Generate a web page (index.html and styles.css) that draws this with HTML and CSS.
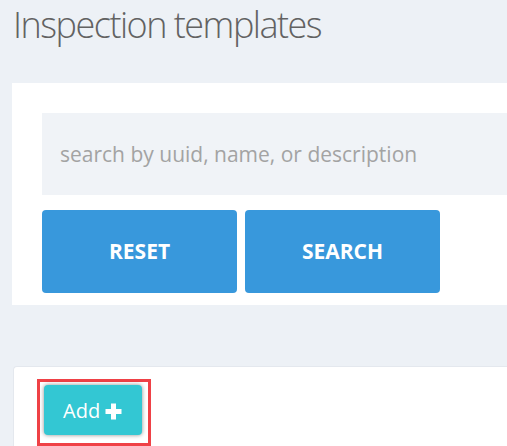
FILE: index.html
```html
<!DOCTYPE html>
<html lang="en">

<head>
    <meta charset="UTF-8">
    <meta name="viewport" content="width=device-width, initial-scale=1.0">
    <title>Inspection templates</title>
    <link rel="stylesheet" href="styles.css">
</head>

<body>
    <div class="page">
        <h1 class="page-title">Inspection templates</h1>

        <div class="card search-card">
            <input type="text" class="search-input" placeholder="search by uuid, name, or description">
            <div class="search-actions">
                <button type="button" class="btn btn-primary">Reset</button>
                <button type="button" class="btn btn-primary">Search</button>
            </div>
        </div>

        <div class="card list-card">
            <span class="highlight">
                <button type="button" class="btn-add">
                    Add
                    <svg class="plus-icon" width="17" height="17" viewBox="0 0 17 17" aria-hidden="true">
                        <path d="M6 0.5h5v5.5h5.5v5H11v5.5H6V11H0.5V6H6z" fill="#fff" />
                    </svg>
                </button>
            </span>
        </div>
    </div>
</body>

</html>
```

FILE: styles.css
```css
body {
    font-family: "Open Sans", Arial, sans-serif;
    margin: 0;
    background-color: #edf1f6;
    overflow: hidden;
}

.page {
    width: 640px;
    padding-left: 12px;
}

.page-title {
    margin: 5px 0 38px 1px;
    font-size: 36px;
    line-height: 40px;
    font-weight: 300;
    letter-spacing: -1.5px;
    color: #626262;
}

.card {
    background: #fff;
}

.search-card {
    padding: 30px 30px 12px 30px;
}

.search-input {
    display: block;
    box-sizing: border-box;
    width: 100%;
    height: 82px;
    padding: 0 18px;
    border: none;
    background-color: #f0f3f7;
    font-family: "Open Sans", Arial, sans-serif;
    font-size: 21px;
    outline: none;
}

.search-input::placeholder {
    color: #a3a3a3;
}

.search-actions {
    display: flex;
    gap: 8px;
    margin-top: 15px;
}

.btn {
    width: 195px;
    height: 83px;
    padding-bottom: 2px;
    border: none;
    border-radius: 4px;
    font-family: "Open Sans", Arial, sans-serif;
    font-size: 21px;
    font-weight: 700;
    text-transform: uppercase;
    color: #fff;
    cursor: pointer;
}

.btn-primary {
    background-color: #3898dc;
}

.list-card {
    margin: 61px 0 0 1px;
    padding: 12px 23px;
    border-radius: 4px;
    border: 1px solid #e4e8ee;
    border-right: none;
    height: 80px;
}

.highlight {
    display: inline-block;
    padding: 3px 6px 8px 4px;
    border: 3px solid #ef4146;
}

.btn-add {
    display: flex;
    align-items: center;
    gap: 5px;
    width: 98px;
    height: 50px;
    padding: 0 0 0 19px;
    border: none;
    border-radius: 4px;
    background-color: #33c7d3;
    box-shadow: 0 0 4px rgba(0, 0, 0, 0.45);
    font-family: "Open Sans", Arial, sans-serif;
    font-size: 20px;
    color: #fff;
    cursor: pointer;
}

.plus-icon {
    display: block;
    margin-top: 2px;
}
```
